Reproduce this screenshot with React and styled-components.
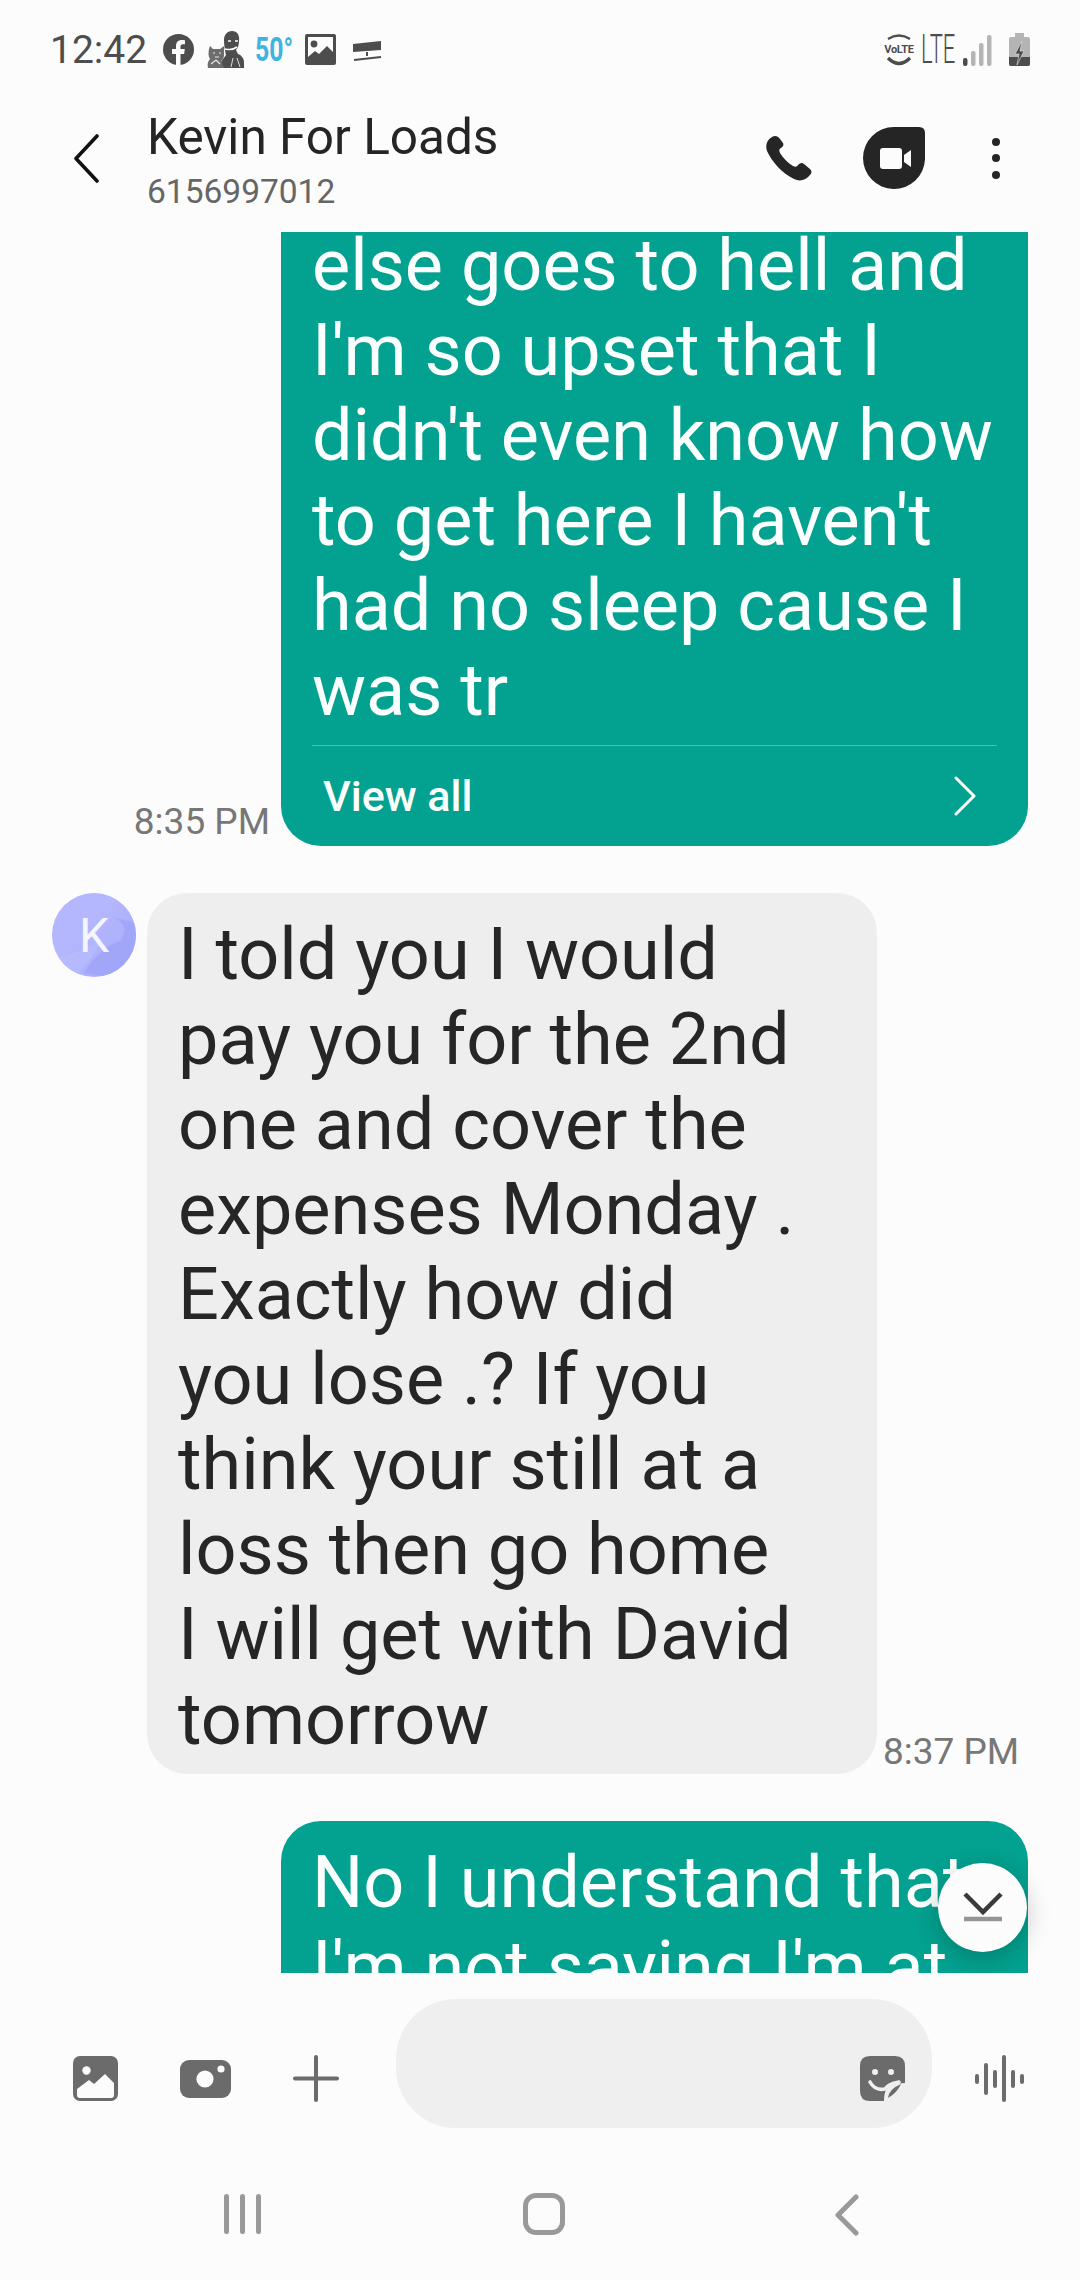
import React from 'react'
import styled, { createGlobalStyle } from 'styled-components'

const GlobalStyle = createGlobalStyle`
    html, body{
        margin: 0;
        padding: 0;
        background: #fcfcfc;
    }
    *{
        box-sizing: border-box;
    }
`

const Page = styled.div`
    width: 1080px;
    height: 2280px;
    display: flex;
    flex-direction: column;
    background: #fcfcfc;
    font-family: Roboto, "Liberation Sans", sans-serif;
    overflow: hidden;
`

const StatusBar = styled.div`
    height: 78px;
    flex: none;
    padding: 21px 50px 0 50px;
    display: flex;
    align-items: center;
    color: #4d4d4d;
`

const Clock = styled.span`
    font-size: 39px;
    line-height: 58px;
    font-weight: 400;
    width: 97px;
    margin-right: 16px;
    white-space: nowrap;
`

const Glyph = styled.svg`
    flex: none;
    display: block;
    margin-left: ${p => p.$ml || 0}px;
    margin-top: ${p => p.$mt || 0}px;
`

const Temp = styled.span`
    font-size: 33px;
    font-weight: 700;
    color: #3fb3e2;
    margin-left: 10px;
    width: 50px;
    transform: scaleX(.75);
    transform-origin: left center;
    white-space: nowrap;
`

const Spacer = styled.div`
    flex: 1;
`

const Volte = styled.div`
    width: 32px;
    height: 34px;
    margin-right: 6px;
    position: relative;
    font-size: 11px;
    line-height: 34px;
    font-weight: 700;
    letter-spacing: -.3px;
    text-align: center;
    color: #4d4d4d;
`

const VolteArc = styled.svg`
    position: absolute;
    left: 0;
    top: 0;
`

const Lte = styled.span`
    width: 32px;
    font-size: 40px;
    font-weight: 300;
    line-height: 34px;
    transform: scaleX(.55);
    transform-origin: left center;
    color: #4d4d4d;
    white-space: nowrap;
`

const Header = styled.header`
    height: 154px;
    flex: none;
    display: flex;
    align-items: center;
    padding: 0 0 0 73px;
`

const TitleBlock = styled.div`
    margin-left: 48px;
    margin-top: 13px;
    display: flex;
    flex-direction: column;
`

const Name = styled.div`
    font-size: 49.5px;
    line-height: 60px;
    color: #252525;
`

const Phone = styled.div`
    font-size: 33.5px;
    line-height: 50px;
    color: #666;
`

const Actions = styled.div`
    margin-left: auto;
    margin-top: 6px;
    display: flex;
    align-items: center;
    padding-right: 80px;
    gap: 50px;
`

const Dots = styled.div`
    display: flex;
    flex-direction: column;
    gap: 8.5px;
    margin-left: 17px;
`

const Dot = styled.span`
    width: 8px;
    height: 8px;
    border-radius: 50%;
    background: #252525;
`

const Thread = styled.main`
    height: 1741px;
    flex: none;
    position: relative;
    overflow: hidden;
    display: flex;
    flex-direction: column;
    gap: 47px;
`

const Row = styled.div`
    display: flex;
    align-items: flex-end;
    flex: none;
    padding: ${p => (p.$out ? '0 52px 0 0' : '0 0 0 52px')};
    justify-content: ${p => (p.$out ? 'flex-end' : 'flex-start')};
`

const Stamp = styled.span`
    font-size: 37px;
    line-height: 40px;
    color: #777;
    white-space: nowrap;
    margin: ${p => (p.$out ? '0 11px 4px 0' : '0 0 2px 6px')};
`

const Bubble = styled.div`
    width: ${p => (p.$out ? 747 : 730)}px;
    flex: none;
    border-radius: ${p => (p.$clipTop ? '0 0 40px 40px' : '40px')};
    background: ${p => (p.$out ? '#03a18f' : '#eeeeee')};
    color: ${p => (p.$out ? '#fbfffe' : '#262626')};
    padding: ${p => (p.$clipTop ? '0 31px 0 31px' : '19px 31px 12px 31px')};
    overflow: hidden;
    align-self: flex-start;
`

const BodyText = styled.div`
    font-size: 72px;
    line-height: 85px;
    white-space: pre;
    margin-top: ${p => p.$shift || 0}px;
`

const ViewAll = styled.div`
    margin-top: 12px;
    border-top: 1.5px solid #4dc0b3;
    height: 101px;
    display: flex;
    align-items: center;
    justify-content: space-between;
    padding: 0 20px 0 11px;
    font-size: 43px;
    font-weight: 500;
`

const Avatar = styled.div`
    width: 84px;
    height: 84px;
    flex: none;
    align-self: flex-start;
    margin-right: 11px;
    border-radius: 50%;
    position: relative;
    overflow: hidden;
    background: linear-gradient(135deg, #b4b7fd 40%, #a5a9fa 100%);
    display: flex;
    align-items: center;
    justify-content: center;
    color: #f5f5ff;
    font-size: 48px;
`

const Swoosh = styled.svg`
    position: absolute;
    inset: 0;
`

const Initial = styled.span`
    position: relative;
`

const Fab = styled.button`
    position: absolute;
    left: 938px;
    top: 1631px;
    width: 89px;
    height: 89px;
    padding: 0;
    border: 0;
    border-radius: 50%;
    background: #fcfcfc;
    box-shadow: 0 6px 24px rgba(0, 0, 0, .22);
    display: flex;
    align-items: center;
    justify-content: center;
`

const Composer = styled.div`
    height: 175px;
    flex: none;
    display: flex;
    align-items: flex-start;
    padding: 26px 0 0 73px;
`

const Tools = styled.div`
    display: flex;
    align-items: center;
    gap: 62px;
    height: 45px;
    margin-top: 57px;
`

const InputPill = styled.div`
    width: 536px;
    height: 129px;
    margin-left: 57px;
    border-radius: 60px;
    background: #efefef;
    display: flex;
    justify-content: flex-end;
    padding: 57px 27px 0 0;
`

const Voice = styled.div`
    height: 47px;
    margin: 56px 0 0 43px;
    display: flex;
    align-items: center;
    gap: 5px;
`

const VoiceBar = styled.span`
    width: 4px;
    height: ${p => p.$h}px;
    border-radius: 2px;
    background: #6c6c6c;
`

const NavBar = styled.nav`
    flex: 1;
    display: flex;
    align-items: flex-start;
    padding: 46px 0 0 224px;
`

const NavLines = styled.div`
    display: flex;
    gap: 11px;
    height: 40px;
`

const NavLine = styled.span`
    width: 5px;
    height: 40px;
    border-radius: 3px;
    background: #999;
`

const NavHome = styled.span`
    width: 42px;
    height: 42px;
    margin: -1px 0 0 262px;
    border: 5px solid #999;
    border-radius: 13px;
`

const received = `I told you I would
pay you for the 2nd
one and cover the
expenses Monday .
Exactly how did
you lose .? If you
think your still at a
loss then go home
I will get with David
tomorrow`

const sent = `else goes to hell and
I'm so upset that I
didn't even know how
to get here I haven't
had no sleep cause I
was tr`

const FacebookIcon = () => (
    <Glyph width="31" height="31" viewBox="0 0 31 31">
        <circle cx="15.5" cy="15.5" r="15.5" fill="#4d4d4d" />
        <path d="M13 31V20H9v-5h4v-3c0-4 2.4-6 6-6 1.5 0 3 .3 3 .3v4h-2c-2 0-2.5 1.2-2.5 2.4V15h4.3l-.7 5h-3.6v11z" fill="#fcfcfc" />
    </Glyph>
)

const PortraitIcon = () => (
    <Glyph $ml={13} width="38" height="37" viewBox="0 0 38 37">
        <path d="M17 9c0-5 3-9 8-9s8 4 7 10c0 4-1 7-3 9l2 4c3 1 6 4 6 8v6H16l-2-6 5-7c-1-4-2-10-2-15z" fill="#4d4d4d" />
        <path d="M21 10h3m4 0h3M18 18c4 1 8 1 12-2" stroke="#fcfcfc" strokeWidth="1.6" fill="none" />
        <path d="M26 27l-2 9m6-9l3 9" stroke="#d8d8d8" strokeWidth="1" fill="none" />
        <path d="M3 15l3 3h7l4-3v9c0 3-1 5-3 6l3 7H1c-1-4 0-7 2-9-2-3-2-8 0-13z" fill="#6d6d6d" />
        <path d="M6 22h2m4 0h2M8 26h4M4 33l5-4m4 4l-4-4" stroke="#e8e8e8" strokeWidth="1.2" fill="none" />
    </Glyph>
)

const PictureIcon = () => (
    <Glyph width="31" height="31" viewBox="0 0 31 31">
        <rect width="31" height="31" rx="2" fill="#4d4d4d" />
        <path d="M3 3h25v15l-6-6-8 8-4-3-7 6z" fill="#fcfcfc" />
        <circle cx="9" cy="10" r="3.4" fill="#4d4d4d" />
    </Glyph>
)

const SignIcon = () => (
    <Glyph $ml={17} $mt={2} width="29" height="22" viewBox="0 0 29 22">
        <path d="M0 4l28-3v9L0 12z" fill="#4d4d4d" />
        <path d="M14 12v4M1 20l27-3" stroke="#4d4d4d" strokeWidth="2" />
    </Glyph>
)

const SignalIcon = () => (
    <Glyph $ml={10} width="29" height="32" viewBox="0 0 29 32">
        <rect x="0" y="24" width="4.5" height="8" rx="2" fill="#4d4d4d" />
        <rect x="8" y="17" width="4.5" height="15" rx="2" fill="#b5b5b5" />
        <rect x="16" y="9" width="4.5" height="23" rx="2" fill="#b5b5b5" />
        <rect x="24" y="1" width="4.5" height="31" rx="2" fill="#b5b5b5" />
    </Glyph>
)

const BatteryIcon = () => (
    <Glyph $ml={17} width="21" height="33" viewBox="0 0 21 33">
        <path d="M6 0h9v4h4a2 2 0 0 1 2 2v25a2 2 0 0 1-2 2H2a2 2 0 0 1-2-2V6a2 2 0 0 1 2-2h4z" fill="#b4b4b4" />
        <path d="M0 24h21v7a2 2 0 0 1-2 2H2a2 2 0 0 1-2-2z" fill="#4d4d4d" />
        <path d="M13 8l-7 13h4l-2 11 7-14h-4l2-10z" fill="#4d4d4d" stroke="#e8e8e8" strokeWidth=".6" />
    </Glyph>
)

const GalleryIcon = () => (
    <Glyph width="45" height="45" viewBox="0 0 45 45">
        <rect width="45" height="45" rx="7" fill="#6b6b6b" />
        <circle cx="13.5" cy="14.5" r="4.2" fill="#fcfcfc" />
        <path d="M4 33l12-9 5 4 11-10 9 9v12q0 3-3 3H7q-3 0-3-3z" fill="#fcfcfc" />
    </Glyph>
)

const CameraIcon = () => (
    <Glyph width="51" height="38" viewBox="0 0 51 38">
        <rect width="51" height="38" rx="9" fill="#6b6b6b" />
        <circle cx="25" cy="19" r="8.6" fill="#fcfcfc" />
        <circle cx="41" cy="9" r="3.6" fill="#fcfcfc" />
    </Glyph>
)

const PlusIcon = () => (
    <Glyph width="46" height="47" viewBox="0 0 46 47">
        <path d="M23 2v43M2 23.5h42" stroke="#6b6b6b" strokeWidth="4" strokeLinecap="round" />
    </Glyph>
)

const StickerIcon = () => (
    <Glyph width="45" height="45" viewBox="0 0 45 45">
        <path d="M10 0h25q10 0 10 10v17q-14 0-19 7-2 4-2 11H10Q0 45 0 35V10Q0 0 10 0z" fill="#6b6b6b" />
        <circle cx="15" cy="16" r="3" fill="#efefef" />
        <circle cx="31" cy="16" r="3" fill="#efefef" />
        <path d="M10 26q5 9 15 7 3-5 14-7" stroke="#efefef" strokeWidth="3.6" fill="none" strokeLinecap="round" />
        <path d="M28 42q1-9 13-14-4 9-13 14z" fill="#6b6b6b" />
    </Glyph>
)

const App = () => {
    return (
        <Page>
            <GlobalStyle />
            <StatusBar>
                <Clock>12:42</Clock>
                <FacebookIcon />
                <PortraitIcon />
                <Temp>50°</Temp>
                <PictureIcon />
                <SignIcon />
                <Spacer />
                <Volte>
                    <VolteArc width="32" height="34" viewBox="0 0 32 34">
                        <path d="M5 6q11-7 22 0" stroke="#4d4d4d" strokeWidth="2.4" fill="none" />
                        <path d="M5 25q11 11 22 0" stroke="#4d4d4d" strokeWidth="3.4" fill="none" />
                    </VolteArc>
                    VoLTE
                </Volte>
                <Lte>LTE</Lte>
                <SignalIcon />
                <BatteryIcon />
            </StatusBar>

            <Header>
                <Glyph $mt={6} width="26" height="49" viewBox="0 0 26 49">
                    <path d="M24 2L3 24.5 24 47" stroke="#111" strokeWidth="3.6" fill="none" strokeLinecap="round" strokeLinejoin="round" />
                </Glyph>
                <TitleBlock>
                    <Name>Kevin For Loads</Name>
                    <Phone>6156997012</Phone>
                </TitleBlock>
                <Actions>
                    <svg width="47" height="46" viewBox="0 0 47 46">
                        <path d="M6 2c3-2 6-1 8 2l3 4c1 2 0 4-2 5-2 1-2 3-1 5 3 5 8 10 13 13 2 1 4 1 5-1 2-2 4-3 6-1l6 5c2 2 2 4 0 6-4 5-10 7-16 4C16 38 6 27 1 16-1 10 1 5 6 2z" fill="#252525" />
                    </svg>
                    <svg width="62" height="63" viewBox="0 0 62 63">
                        <path d="M31 0h25q6 0 6 6v26A31 31 0 1 1 31 0z" fill="#252525" />
                        <rect x="17" y="21" width="22" height="21" rx="3" fill="#fcfcfc" />
                        <path d="M41 28l7-5v17l-7-5z" fill="#fcfcfc" />
                    </svg>
                    <Dots>
                        <Dot />
                        <Dot />
                        <Dot />
                    </Dots>
                </Actions>
            </Header>

            <Thread>
                <Row $out>
                    <Stamp $out>8:35 PM</Stamp>
                    <Bubble $out $clipTop>
                        <BodyText $shift={-9}>{sent}</BodyText>
                        <ViewAll>
                            View all
                            <svg width="24" height="40" viewBox="0 0 24 40">
                                <path d="M3 2l18 18L3 38" stroke="#fbfffe" strokeWidth="3" fill="none" strokeLinecap="round" strokeLinejoin="round" />
                            </svg>
                        </ViewAll>
                    </Bubble>
                </Row>

                <Row>
                    <Avatar>
                        <Swoosh width="84" height="84" viewBox="0 0 84 84">
                            <path d="M60 24q20 8 8 24-20 6-36 32l52 8V30z" fill="#9ea3f8" opacity=".75" />
                            <path d="M0 66q30-6 50-20-10 20-26 38H0z" fill="#bcbffd" opacity=".5" />
                        </Swoosh>
                        <Initial>K</Initial>
                    </Avatar>
                    <Bubble>
                        <BodyText>{received}</BodyText>
                    </Bubble>
                    <Stamp>8:37 PM</Stamp>
                </Row>

                <Row $out>
                    <Bubble $out>
                        <BodyText>{"No I understand that\nI'm not saying I'm at"}</BodyText>
                    </Bubble>
                </Row>

                <Fab aria-label="Scroll to latest">
                    <svg width="40" height="34" viewBox="0 0 40 34">
                        <path d="M2 3l18 18L38 3" stroke="#3a3a3a" strokeWidth="4.5" fill="none" />
                        <path d="M1 28h38" stroke="#959595" strokeWidth="4.5" />
                    </svg>
                </Fab>
            </Thread>

            <Composer>
                <Tools>
                    <GalleryIcon />
                    <CameraIcon />
                    <PlusIcon />
                </Tools>
                <InputPill>
                    <StickerIcon />
                </InputPill>
                <Voice>
                    <VoiceBar $h={10} />
                    <VoiceBar $h={32} />
                    <VoiceBar $h={18} />
                    <VoiceBar $h={47} />
                    <VoiceBar $h={18} />
                    <VoiceBar $h={10} />
                </Voice>
            </Composer>

            <NavBar>
                <NavLines>
                    <NavLine />
                    <NavLine />
                    <NavLine />
                </NavLines>
                <NavHome />
                <Glyph $ml={270} width="24" height="42" viewBox="0 0 24 42">
                    <path d="M21 3L3 21l18 18" stroke="#999" strokeWidth="5" fill="none" strokeLinecap="round" strokeLinejoin="round" />
                </Glyph>
            </NavBar>
        </Page>
    )
}

export default App
